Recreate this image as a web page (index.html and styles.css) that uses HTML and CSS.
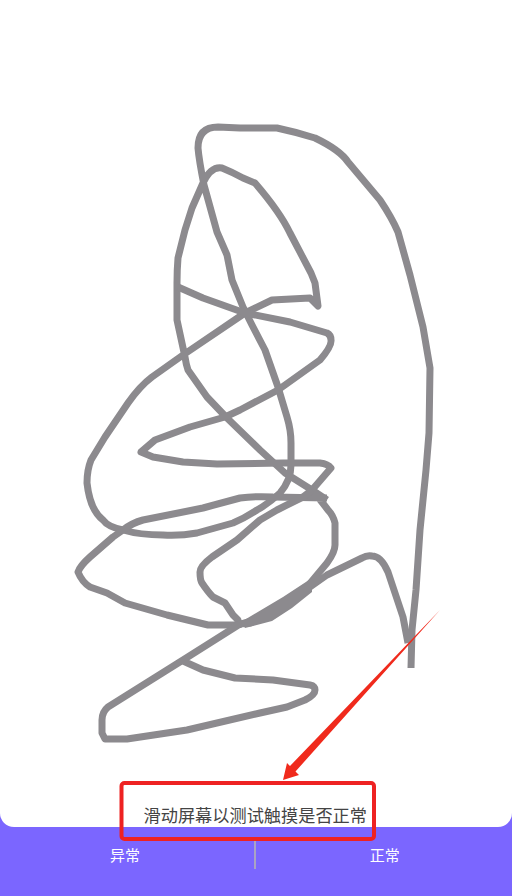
FILE: index.html
```html
<!DOCTYPE html>
<html lang="zh">
<head>
<meta charset="utf-8">
<title>触摸测试</title>
<link rel="stylesheet" href="styles.css">
</head>
<body>
<main class="screen">
  <section class="card">
    <svg class="canvas" viewBox="0 0 512 827" width="512" height="827" aria-hidden="true">
      <g class="ink">
        <path d="M411 668 L412 630 L416 590 L420 530 L426 470 L429 433 L430 368 L423 327 L410 275 L398 232 Q392 218 380 200 L348 162 Q340 150 315 138 Q296 132 277 128 L240 128 L218 127 Q198 127 198 148 Q199 160 204 185 L217 232 L227 255 L232 280 L243 307 L252 325 L265 350 L278 387 L287 417 Q291 430 291 443 L291 465 Q291 480 280 493 Q268 504 257 510 Q245 518 233 523 L197 533 Q180 536 163 535 Q140 535 123 530 Q108 527 103 520 Q90 510 87 483 Q87 470 91 460 L105 437 L128 403 Q140 386 152 377 L183 355 L245 313 L272 300 L310 298 L318 306 L315 283 L311 273 L290 233 Q280 212 255 183 L243 178 Q232 172 222 168 Q211 166 203 183 L192 208 L185 230 L178 258 Q177 270 177 283 L177 320 L185 357 Q186 364 188 370 L207 397 L227 418 L260 450 L285 473 L312 490 L327 500"/>
        <path d="M327 498 L273 497 Q255 496 240 498 L203 508 L143 520 Q132 523 123 530 L113 537 L90 557 Q80 566 78 572 Q82 582 90 587 L107 593 L125 603 L167 615 L208 625 L237 625 L273 615 L307 587 L327 563 Q335 552 335 545 L335 523 Q333 515 328 510 L318 497 L312 490 L331 468 Q328 464 320 463 L283 463 L217 464 L183 462 L153 457 L141 452 L155 440 L190 427 L225 417 L240 410 L278 390 L320 360 Q332 346 331 340 Q331 335 327 333 L290 322 L245 313 L203 298 L178 287"/>
        <path d="M312 490 L303 497 L277 510 L260 520 L237 540 L212 557 Q200 566 200 572 Q200 580 202 583 Q208 592 213 597 L225 603 L233 615 L238 620 L238 628"/>
        <path d="M408 643 L403 617 L388 572 Q381 556 372 556 Q367 555 362 558 L327 575 L310 587 L290 603 L250 623 L240 624 L183 660 L108 707 Q102 712 102 720 L102 733 L105 739 L127 739 L187 730 L260 713 L287 707 L305 700 Q315 695 315 690 Q315 686 310 685 L273 680 L235 678 L203 670 L183 661"/>
      </g>
      <path class="band" d="M241 622 L283 597 L312 578 L312 592 L292 608 L272 621 L245 628 Z"/>
    </svg>
    <p class="hint">滑动屏幕以测试触摸是否正常</p>
  </section>
  <nav class="actions">
    <button class="action" type="button">异常</button>
    <span class="divider"></span>
    <button class="action" type="button">正常</button>
  </nav>
  <svg class="annotation" viewBox="0 0 512 896" width="512" height="896" aria-hidden="true">
    <path class="arrow" d="M440 610 L295.5 771.5 L299 775 L283 780 L287 763 L290 766 Z"/>
    <rect class="frame" x="121.5" y="783" width="252.5" height="56" rx="3"/>
  </svg>
</main>
</body>
</html>
```
FILE: styles.css
```css
* { box-sizing: border-box; }
html, body { margin: 0; padding: 0; }
body { background: #7b66ff; }
.screen {
  position: relative;
  width: 512px;
  height: 896px;
  display: flex;
  flex-direction: column;
  overflow: hidden;
  background: #7b66ff;
  font-family: "Noto Sans CJK SC", "Noto Sans", sans-serif;
}
.card {
  position: relative;
  height: 827px;
  flex: none;
  display: flex;
  align-items: flex-end;
  justify-content: flex-end;
  padding: 0 145px 0 0;
  background: #fff;
  border-radius: 0 0 14px 14px;
}
.canvas { position: absolute; left: 0; top: 0; }
.ink path {
  fill: none;
  stroke: #8c8a8e;
  stroke-width: 7;
  stroke-linejoin: round;
  stroke-linecap: butt;
}
.band { fill: #8c8a8e; }
.hint {
  position: relative;
  margin: 0;
  font-size: 17.2px;
  line-height: 24px;
  color: #444;
  white-space: nowrap;
}
.actions {
  flex: 1;
  display: flex;
  align-items: flex-start;
  gap: 4px;
  padding: 14px 2px 0 0;
}
.action {
  flex: 1;
  height: 28px;
  padding: 0;
  border: 0;
  background: none;
  color: #fff;
  font: inherit;
  font-size: 15px;
  line-height: 28px;
}
.divider {
  flex: none;
  width: 1.5px;
  height: 28px;
  background: #a9a3c4;
}
.annotation {
  position: absolute;
  left: 0;
  top: 0;
  pointer-events: none;
}
.arrow { fill: #f02a1c; }
.frame {
  fill: none;
  stroke: #ee2222;
  stroke-width: 4;
}
```
